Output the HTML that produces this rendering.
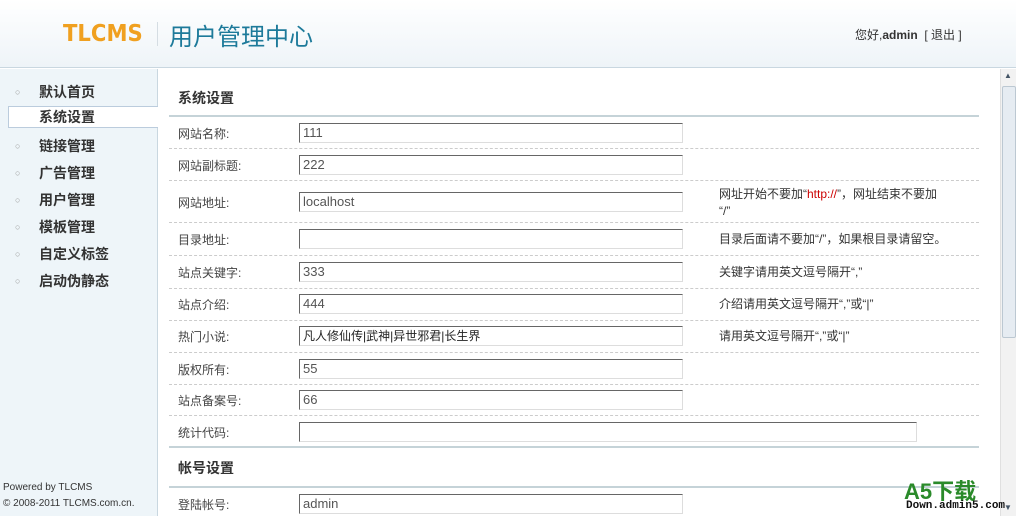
<!DOCTYPE html>
<html><head><meta charset="utf-8"><style>
*{margin:0;padding:0;box-sizing:border-box}
body{width:1016px;height:516px;overflow:hidden;font-family:"Liberation Sans","Noto Sans CJK SC","WenQuanYi Zen Hei",sans-serif;font-size:12px;color:#333;background:#fff;position:relative}
.hd{position:absolute;left:0;top:0;width:1016px;height:68px;background:linear-gradient(#fff,#eef4f8);border-bottom:1px solid #c9d7e0}
.logo{position:absolute;left:63px;top:21px;font:900 23px "DejaVu Sans",sans-serif;color:#f0a020;transform:scaleX(0.92);transform-origin:left}
.sep{position:absolute;left:157px;top:22px;width:1px;height:24px;background:#d5dde3}
.title{position:absolute;left:169px;top:17px;font-size:24px;color:#1d7a9a}
.hi{position:absolute;left:855px;top:26px;font-size:12px;color:#333}
.sb{position:absolute;left:0;top:69px;width:158px;height:447px;background:#eef5f9;border-right:1px solid #c9d7e0}
.sb div{position:absolute;left:0;height:26px;line-height:26px;width:157px;font-size:14px;font-weight:bold;color:#333;padding-left:39px}
.sb div:before{content:"○";position:absolute;left:15px;font-size:9px;color:#999;font-weight:normal}
.sb .on{left:8px;width:150px;background:#fff;border:1px solid #bcd;padding-left:30px;border-right:none}
.sb .on:before{content:""}
.h2{position:absolute;left:178px;font-size:14px;font-weight:bold;color:#333}
.ln{position:absolute;left:169px;width:810px;height:2px;background:#c5d3d8}
.row{position:absolute;left:169px;width:810px;border-bottom:1px dashed #ccc}
.lb{position:absolute;left:178px;font-size:12px;color:#444}
.in{position:absolute;left:299px;width:384px;height:20px;border:1px solid #ddd;border-top-color:#666;border-left-color:#666;font-size:13px;color:#555;padding-left:3px;line-height:18px}
.tip{position:absolute;left:719px;font-size:12px;color:#333;line-height:17px}
.sc{position:absolute;left:1000px;top:69px;width:16px;height:447px;background:#f2f2f2;border-left:1px solid #e0e0e0}
.th{position:absolute;left:1px;top:17px;width:14px;height:252px;background:#e6ecf2;border:1px solid #bcc8d2;border-radius:2px}
.a5{position:absolute;left:904px;top:481px;font:bold 22px "Liberation Sans","Noto Sans CJK SC",sans-serif;color:#2a8a2a;line-height:22px}
.dw{position:absolute;left:906px;top:500px;font:bold 11px "Liberation Mono",monospace;color:#111}
</style></head><body>
<div class="hd"><div class="logo">TLCMS</div><div class="sep"></div><div class="title">用户管理中心</div><div class="hi">您好,<b>admin</b> &nbsp;[ 退出 ]</div></div>
<div class="sb">
<div style="top:10px">默认首页</div>
<div class="on" style="top:37px;height:22px;line-height:20px">系统设置</div>
<div style="top:64px">链接管理</div>
<div style="top:91px">广告管理</div>
<div style="top:118px">用户管理</div>
<div style="top:145px">模板管理</div>
<div style="top:172px">自定义标签</div>
<div style="top:199px">启动伪静态</div>
<p style="position:absolute;top:411px;left:3px;font-size:10px;line-height:16px">Powered by TLCMS<br>© 2008-2011 TLCMS.com.cn.</p>
</div>
<div class="h2" style="top:88px">系统设置</div><div class="ln" style="top:115px"></div>
<div class="row" style="top:117px;height:32px"></div><div class="lb" style="top:125px">网站名称:</div><div class="in" style="top:123px">111</div>
<div class="row" style="top:149px;height:32px"></div><div class="lb" style="top:157px">网站副标题:</div><div class="in" style="top:155px">222</div>
<div class="row" style="top:181px;height:42px"></div><div class="lb" style="top:194px">网站地址:</div><div class="in" style="top:192px">localhost</div><div class="tip" style="top:186px">网址开始不要加“<span style="color:#c00">http://</span>”，网址结束不要加<br>“/”</div>
<div class="row" style="top:223px;height:33px"></div><div class="lb" style="top:231px">目录地址:</div><div class="in" style="top:229px"></div><div class="tip" style="top:231px">目录后面请不要加“/”，如果根目录请留空。</div>
<div class="row" style="top:256px;height:33px"></div><div class="lb" style="top:264px">站点关键字:</div><div class="in" style="top:262px">333</div><div class="tip" style="top:264px">关键字请用英文逗号隔开“,”</div>
<div class="row" style="top:289px;height:32px"></div><div class="lb" style="top:296px">站点介绍:</div><div class="in" style="top:294px">444</div><div class="tip" style="top:296px">介绍请用英文逗号隔开“,”或“|”</div>
<div class="row" style="top:321px;height:32px"></div><div class="lb" style="top:328px">热门小说:</div><div class="in" style="top:326px;color:#222;font-size:12px">凡人修仙传|武神|异世邪君|长生界</div><div class="tip" style="top:328px">请用英文逗号隔开“,”或“|”</div>
<div class="row" style="top:353px;height:32px"></div><div class="lb" style="top:361px">版权所有:</div><div class="in" style="top:359px">55</div>
<div class="row" style="top:385px;height:31px"></div><div class="lb" style="top:392px">站点备案号:</div><div class="in" style="top:390px">66</div>
<div class="row" style="top:416px;height:32px;border-bottom:2px solid #c5d3d8"></div><div class="lb" style="top:424px">统计代码:</div><div class="in" style="top:422px;width:618px"></div>
<div class="h2" style="top:458px">帐号设置</div><div class="ln" style="top:486px"></div>
<div class="lb" style="top:496px">登陆帐号:</div><div class="in" style="top:494px">admin</div>
<div class="sc"><div style="position:absolute;top:2px;left:3px;font-size:8px;color:#456">▲</div><div class="th"></div><div style="position:absolute;top:434px;left:3px;font-size:8px;color:#456">▼</div></div>
<div class="a5">A5下载</div><div class="dw">Down.admin5.com</div>
</body></html>
